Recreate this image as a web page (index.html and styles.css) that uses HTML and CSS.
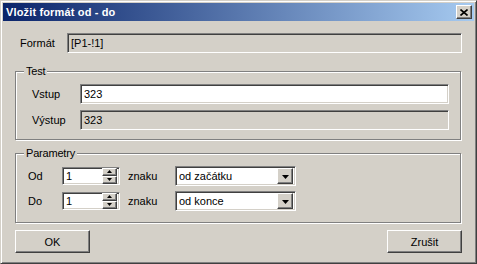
FILE: index.html
```html
<!DOCTYPE html>
<html lang="cs">
<head>
<meta charset="utf-8">
<title>Vložit formát od - do</title>
<link rel="stylesheet" href="styles.css">
</head>
<body>
<div class="window">
  <div class="titlebar">
    <span class="title">Vložit formát od - do</span>
    <button class="btn close" type="button" aria-label="Zavřít">
      <svg width="8" height="7" viewBox="0 0 8 7"><path d="M0.5 0.5 L7.5 6.5 M7.5 0.5 L0.5 6.5" stroke="#000" stroke-width="1.6" fill="none"/></svg>
    </button>
  </div>
  <div class="body">
    <div class="format-row">
      <label class="lbl format-lbl">Formát</label>
      <div class="field ro format-field">[P1-!1]</div>
    </div>

    <fieldset class="group">
      <legend>Test</legend>
      <div class="group-inner test-inner">
        <div class="test-row">
          <label class="lbl test-lbl">Vstup</label>
          <div class="field test-field">323</div>
        </div>
        <div class="test-row">
          <label class="lbl test-lbl">Výstup</label>
          <div class="field ro test-field">323</div>
        </div>
      </div>
    </fieldset>

    <fieldset class="group params">
      <legend>Parametry</legend>
      <div class="group-inner params-inner">
        <div class="param-row">
          <label class="lbl param-lbl">Od</label>
          <div class="field spin">
            <span class="spin-val">1</span>
            <span class="spin-btns">
              <span class="btn spin-btn"><svg width="5" height="3" viewBox="0 0 5 3"><path d="M2.5 0 L5 3 L0 3 Z" fill="#000"/></svg></span>
              <span class="btn spin-btn"><svg width="5" height="3" viewBox="0 0 5 3"><path d="M0 0 L5 0 L2.5 3 Z" fill="#000"/></svg></span>
            </span>
          </div>
          <span class="lbl znaku">znaku</span>
          <div class="field combo">
            <span class="combo-val">od začátku</span>
            <span class="btn drop"><svg width="7" height="4" viewBox="0 0 7 4"><path d="M0 0 L7 0 L3.5 4 Z" fill="#000"/></svg></span>
          </div>
        </div>
        <div class="param-row">
          <label class="lbl param-lbl">Do</label>
          <div class="field spin">
            <span class="spin-val">1</span>
            <span class="spin-btns">
              <span class="btn spin-btn"><svg width="5" height="3" viewBox="0 0 5 3"><path d="M2.5 0 L5 3 L0 3 Z" fill="#000"/></svg></span>
              <span class="btn spin-btn"><svg width="5" height="3" viewBox="0 0 5 3"><path d="M0 0 L5 0 L2.5 3 Z" fill="#000"/></svg></span>
            </span>
          </div>
          <span class="lbl znaku">znaku</span>
          <div class="field combo">
            <span class="combo-val">od konce</span>
            <span class="btn drop"><svg width="7" height="4" viewBox="0 0 7 4"><path d="M0 0 L7 0 L3.5 4 Z" fill="#000"/></svg></span>
          </div>
        </div>
      </div>
    </fieldset>

    <div class="buttons">
      <button class="btn push" type="button">OK</button>
      <button class="btn push" type="button">Zrušit</button>
    </div>
  </div>
</div>
</body>
</html>
```

FILE: styles.css
```css
* { box-sizing: border-box; }
html, body { margin: 0; padding: 0; background: #d4d0c8; }
body {
  font-family: "Liberation Sans", Arial, sans-serif;
  font-size: 11px;
  color: #000;
}
.window {
  width: 477px;
  height: 264px;
  background: #d4d0c8;
  border: 1px solid;
  border-color: #d4d0c8 #404040 #404040 #d4d0c8;
  box-shadow: inset 1px 1px #fff, inset -1px -1px #808080;
  padding: 2px;
  display: flex;
  flex-direction: column;
}
.titlebar {
  height: 18px;
  flex: none;
  background: linear-gradient(to right, #0a246a, #a6caf0);
  display: flex;
  align-items: center;
  justify-content: space-between;
  padding: 0 2px 0 3px;
}
.title {
  color: #fff;
  font-weight: bold;
  font-size: 11px;
  letter-spacing: 0.15px;
  line-height: 18px;
}
.btn {
  background: #d4d0c8;
  border: 1px solid;
  border-color: #fff #404040 #404040 #fff;
  box-shadow: inset -1px -1px #808080;
  padding: 0;
  margin: 0;
  display: flex;
  align-items: center;
  justify-content: center;
  font: inherit;
  color: #000;
}
.close {
  width: 16px;
  height: 14px;
}
.body {
  margin-top: 1px;
  flex: 1;
  padding: 11px 12px 0 12px;
  display: flex;
  flex-direction: column;
}
.lbl { line-height: 13px; white-space: nowrap; }
.field {
  background: #fff;
  border: 1px solid;
  border-color: #808080 #fff #fff #808080;
  box-shadow: inset 1px 1px #404040, inset -1px -1px #d4d0c8;
  padding: 0 2px 0 3px;
  display: flex;
  align-items: center;
  white-space: nowrap;
}
.field.ro { background: #d4d0c8; }
.format-row {
  display: flex;
  align-items: center;
  height: 20px;
}
.format-lbl { width: 52px; padding-left: 5px; }
.format-field { width: 395px; height: 20px; }

.group {
  margin: 12px 0 0 0;
  padding: 0;
  width: 446px;
  min-width: 0;
  border: 1px solid #808080;
  box-shadow: inset 1px 1px #fff, 1px 1px #fff;
}
.group legend {
  margin-left: 8px;
  padding: 0 2px;
  line-height: 13px;
  background: #d4d0c8;
  letter-spacing: -0.2px;
}
.params { margin-top: 7px; }
.test-inner {
  padding: 6px 0 9px 16px;
  display: flex;
  flex-direction: column;
  gap: 6px;
}
.test-row { display: flex; align-items: center; height: 20px; }
.test-lbl { width: 48px; }
.test-field { width: 369px; height: 20px; }

.params-inner {
  padding: 6px 0 11px 12px;
  display: flex;
  flex-direction: column;
  gap: 5px;
}
.param-row { display: flex; align-items: center; height: 20px; }
.param-lbl { width: 34px; }
.spin {
  width: 58px;
  height: 18px;
  padding: 2px 2px 2px 3px;
  justify-content: space-between;
}
.spin-val { line-height: 13px; }
.spin-btns {
  display: flex;
  flex-direction: column;
  width: 15px;
  height: 16px;
  margin-top: -1px;
}
.spin-btn { width: 15px; height: 8px; }
.znaku { margin-left: 8px; width: 47px; }
.combo {
  width: 121px;
  height: 20px;
  padding: 2px 2px 2px 3px;
  justify-content: space-between;
}
.drop { width: 16px; height: 16px; }
.drop svg { margin-top: 1px; }

.buttons {
  margin-top: 7px;
  display: flex;
  justify-content: space-between;
}
.push {
  width: 75px;
  height: 23px;
  font-size: 11px;
}
```
